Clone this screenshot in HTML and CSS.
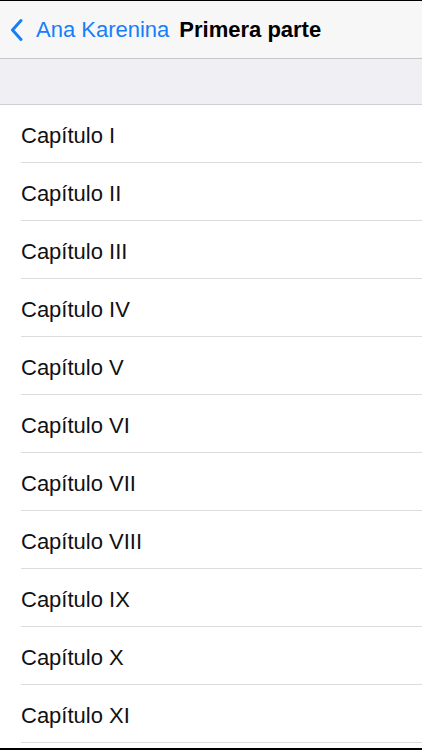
FILE: index.html
```html
<!DOCTYPE html>
<html lang="es">
<head>
<meta charset="utf-8">
<title>Primera parte</title>
<link rel="stylesheet" href="styles.css">
</head>
<body>
<div class="screen">
  <header class="nav">
    <a class="back" href="#">
      <svg class="chev" width="13" height="24" viewBox="0 0 13 24" aria-hidden="true">
        <path d="M11 2.5 L2.5 12 L11 21.5" fill="none" stroke="#167ef9" stroke-width="3" stroke-linecap="round" stroke-linejoin="round"/>
      </svg>
      <span class="back-label">Ana Karenina</span>
    </a>
    <span class="title">Primera parte</span>
  </header>
  <div class="band"></div>
  <ul class="list">
    <li class="row">Capítulo I</li>
    <li class="row">Capítulo II</li>
    <li class="row">Capítulo III</li>
    <li class="row">Capítulo IV</li>
    <li class="row">Capítulo V</li>
    <li class="row">Capítulo VI</li>
    <li class="row">Capítulo VII</li>
    <li class="row">Capítulo VIII</li>
    <li class="row">Capítulo IX</li>
    <li class="row">Capítulo X</li>
    <li class="row">Capítulo XI</li>
  </ul>
</div>
</body>
</html>
```

FILE: styles.css
```css
html, body {
  margin: 0;
  padding: 0;
  background: #000;
  height: 750px;
  overflow: hidden;
}
body {
  padding-top: 1px;
  box-sizing: border-box;
  font-family: "Liberation Sans", Arial, sans-serif;
}
.screen {
  height: 747px;
  background: #fff;
  overflow: hidden;
}
.nav {
  height: 57px;
  background: #f7f7f8;
  border-bottom: 1px solid #c6c6ca;
  display: flex;
  align-items: center;
  padding-left: 10px;
  gap: 10px;
}
.back {
  display: flex;
  align-items: center;
  gap: 13px;
  text-decoration: none;
  color: #167ef9;
  font-size: 22px;
}
.chev {
  display: block;
  margin-top: 1px;
}
.title {
  font-size: 22px;
  font-weight: bold;
  color: #000;
}
.band {
  height: 45px;
  background: #efeff4;
  border-bottom: 1px solid #cfced3;
}
.list {
  list-style: none;
  margin: 0;
  padding: 0 0 0 21px;
}
.row {
  box-sizing: content-box;
  height: 53px;
  padding-top: 4px;
  border-bottom: 1px solid #dcdcdf;
  display: flex;
  align-items: center;
  font-size: 22px;
  color: #111;
}
```
